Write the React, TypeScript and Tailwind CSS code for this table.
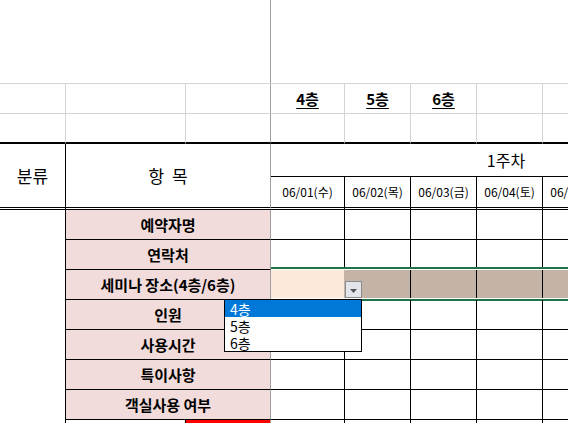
import React from 'react';

const dayW = ['w-[74px]', 'w-[66px]', 'w-[66px]', 'w-[66px]', 'w-[66px]', 'w-[66px]', 'w-[66px]'];
const days = ['06/01(수)', '06/02(목)', '06/03(금)', '06/04(토)', '06/05(일)', '06/06(월)', '06/07(화)'];
const floors = ['4층', '5층', '6층', '', '', '', ''];
const items = ['예약자명', '연락처', '세미나 장소(4층/6층)', '인원', '사용시간', '특이사항', '객실사용 여부'];

function GrayRow({ labels, thick }: { labels: string[]; thick?: boolean }) {
    const bottom = thick ? 'border-b-2 border-b-black' : 'border-b border-b-[#d4d4d4]';
    return (
        <div className="flex h-[30px]">
            <div className={`w-[66px] border-r border-r-[#d4d4d4] ${bottom}`} />
            <div className={`w-[120px] border-r border-r-[#d4d4d4] ${bottom}`} />
            <div className={`w-[85px] border-r border-r-[#9e9e9e] ${bottom}`} />
            {dayW.map((w, i) => (
                <div
                    key={i}
                    className={`${w} flex items-center justify-center border-r border-r-[#d4d4d4] ${bottom} text-[15px] font-bold leading-none underline underline-offset-[3px]`}
                >
                    {labels[i]}
                </div>
            ))}
        </div>
    );
}

function DataRow({ label, selected }: { label: string; selected?: boolean }) {
    return (
        <div className="relative flex h-[30px]">
            <div className="w-[66px] border-r border-black" />
            <div className="w-[205px] flex items-center justify-center bg-[#f2dcdb] border-b border-b-black border-r border-r-[#9e9e9e] text-[15px] font-bold leading-none">
                {label}
            </div>
            <div className="relative flex">
                {dayW.map((w, i) => (
                    <div
                        key={i}
                        className={`${w} border-b border-black ${
                            selected
                                ? i === 0
                                    ? 'bg-[#fce9da] border-r border-r-[#c4b4a6]'
                                    : 'bg-[#c4b4a6] border-r'
                                : 'border-r'
                        }`}
                    />
                ))}
                {selected && (
                    <>
                        {/* selection frame */}
                        <div className="pointer-events-none absolute left-0 right-0 -top-[3px] h-[34px] border-y-2 border-[#217346]">
                            <div className="h-full border-y border-white" />
                        </div>
                        {/* dropdown button */}
                        <div className="absolute left-[74px] top-[11px] w-[17px] h-[17px] flex items-center justify-center border border-[#8c8c8c] bg-[#e3e5ea]">
                            <svg width="7" height="4" viewBox="0 0 7 4" className="mt-[2px]">
                                <polygon points="0,0 7,0 3.5,4" fill="#555" />
                            </svg>
                        </div>
                    </>
                )}
            </div>
            {selected && (
                <div className="absolute z-10 left-[224px] top-[29px] w-[138px] h-[53px] border border-black bg-white text-[14px] leading-none">
                    <div className="h-[17px] flex items-center pl-[5px] bg-[#0078d7] text-white">4층</div>
                    <div className="h-[17px] flex items-center pl-[5px]">5층</div>
                    <div className="h-[17px] flex items-center pl-[5px]">6층</div>
                </div>
            )}
        </div>
    );
}

export default function App() {
    return (
        <div className="w-[568px] h-[423px] overflow-hidden bg-white text-black font-['Noto_Sans_CJK_KR','Noto_Sans',sans-serif]">
            <div className="w-[741px]">
                {/* Blank top area */}
                <div className="flex h-[84px] border-b border-[#d4d4d4]">
                    <div className="w-[271px] border-r border-[#9e9e9e]" />
                    <div className="flex-1" />
                </div>

                <GrayRow labels={floors} />
                <GrayRow labels={[]} thick />

                {/* Header */}
                <div className="flex h-[66px]">
                    <div className="w-[66px] flex items-center justify-center border-r border-r-black border-b-[3px] border-b-black border-double text-[17px] leading-none">
                        분류
                    </div>
                    <div className="w-[205px] flex items-center justify-center border-r border-r-[#9e9e9e] border-b-[3px] border-b-black border-double text-[17px] leading-none [word-spacing:4px]">
                        항 목
                    </div>
                    <div className="w-[470px] flex flex-col">
                        <div className="h-[33px] flex items-center justify-center border-b border-black text-[16px] leading-none">
                            1주차
                        </div>
                        <div className="h-[33px] flex">
                            {days.map((d, i) => (
                                <div
                                    key={d}
                                    className={`${dayW[i]} flex items-center justify-center border-r border-r-black border-b-[3px] border-b-black border-double text-[12px] leading-none pb-[1px]`}
                                >
                                    {d}
                                </div>
                            ))}
                        </div>
                    </div>
                </div>

                {/* Rows */}
                {items.map((label, i) => (
                    <DataRow key={label} label={label} selected={i === 2} />
                ))}

                <div className="flex h-[30px]">
                    <div className="w-[66px] border-r border-black" />
                    <div className="w-[120px] border-r border-black" />
                    <div className="w-[85px] bg-[#ff0000] border-r border-[#9e9e9e]" />
                    {dayW.map((w, i) => (
                        <div key={i} className={`${w} border-r border-black`} />
                    ))}
                </div>
            </div>
        </div>
    );
}
